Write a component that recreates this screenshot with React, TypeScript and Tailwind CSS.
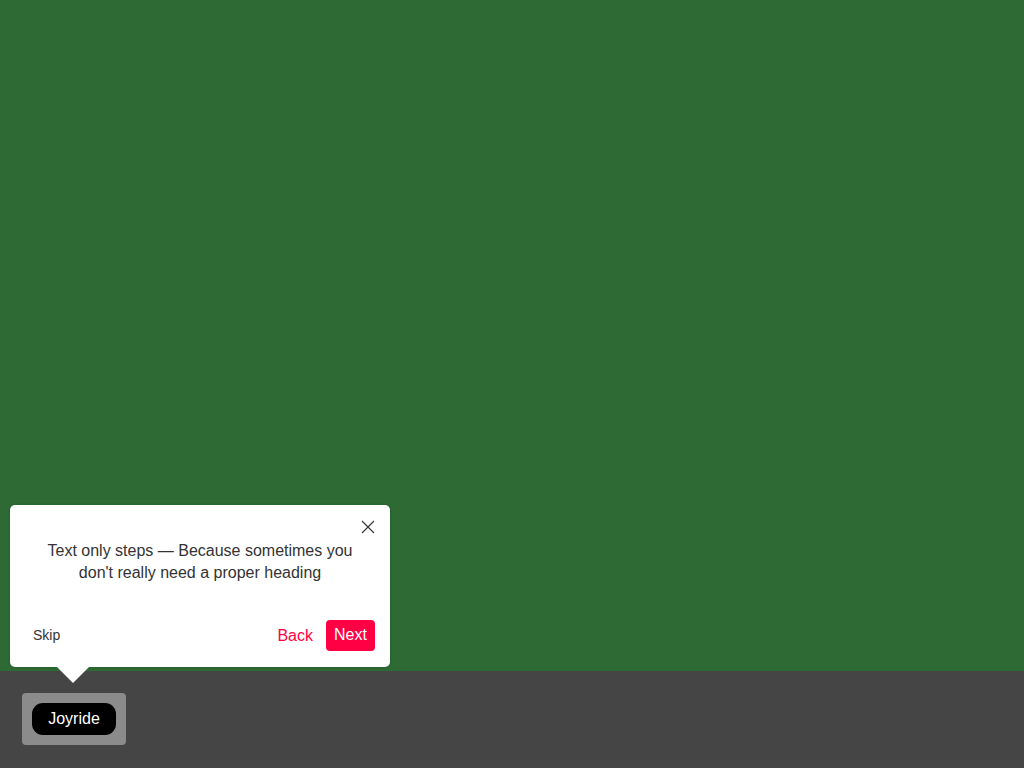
import React from "react";

const Tooltip = () => {
  return (
    <div className="absolute left-[10px] top-[505px] h-[162px] w-[380px] rounded-[5px] bg-white p-[15px] text-[#333] shadow-[0_0_3px_rgba(0,0,0,0.15)]">
      {/* Close */}
      <button className="absolute right-0 top-0 p-[15px]" aria-label="Close">
        <svg width="14" height="14" viewBox="0 0 14 14" className="block">
          <path d="M1 1 L13 13 M13 1 L1 13" stroke="#333" strokeWidth="1.1" fill="none" />
        </svg>
      </button>

      <div className="px-[10px] py-[20px] text-center text-[16px] leading-[1.4]">
        Text only steps — Because sometimes you don't really need a proper heading
      </div>

      <div className="mt-[15px] flex items-center justify-between">
        <button className="pl-[8px] text-[14px] leading-[31px] text-[#333]">Skip</button>
        <div className="flex items-center gap-[13px]">
          <button className="text-[16px] leading-[31px] text-[#ff0044]">Back</button>
          <button className="h-[31px] w-[49px] rounded-[4px] bg-[#ff0044] text-[16px] text-white">
            Next
          </button>
        </div>
      </div>

      {/* Arrow */}
      <div className="absolute left-[47px] top-full h-0 w-0 border-x-[16px] border-t-[16px] border-x-transparent border-t-white" />
    </div>
  );
};

export default function App() {
  return (
    <div className="relative flex h-[768px] w-[1024px] flex-col overflow-hidden font-['Liberation_Sans',Arial,sans-serif]">
      <main className="flex-1 bg-[#2d6a34]" />
      <footer className="h-[97px] bg-[#454545] pl-[22px] pt-[22px]">
        <div className="inline-block rounded-[4px] bg-[#8b8b8b] p-[10px]">
          <button className="h-[32px] w-[84px] rounded-[11px] bg-black text-[16px] text-white">
            Joyride
          </button>
        </div>
      </footer>
      <Tooltip />
    </div>
  );
}
